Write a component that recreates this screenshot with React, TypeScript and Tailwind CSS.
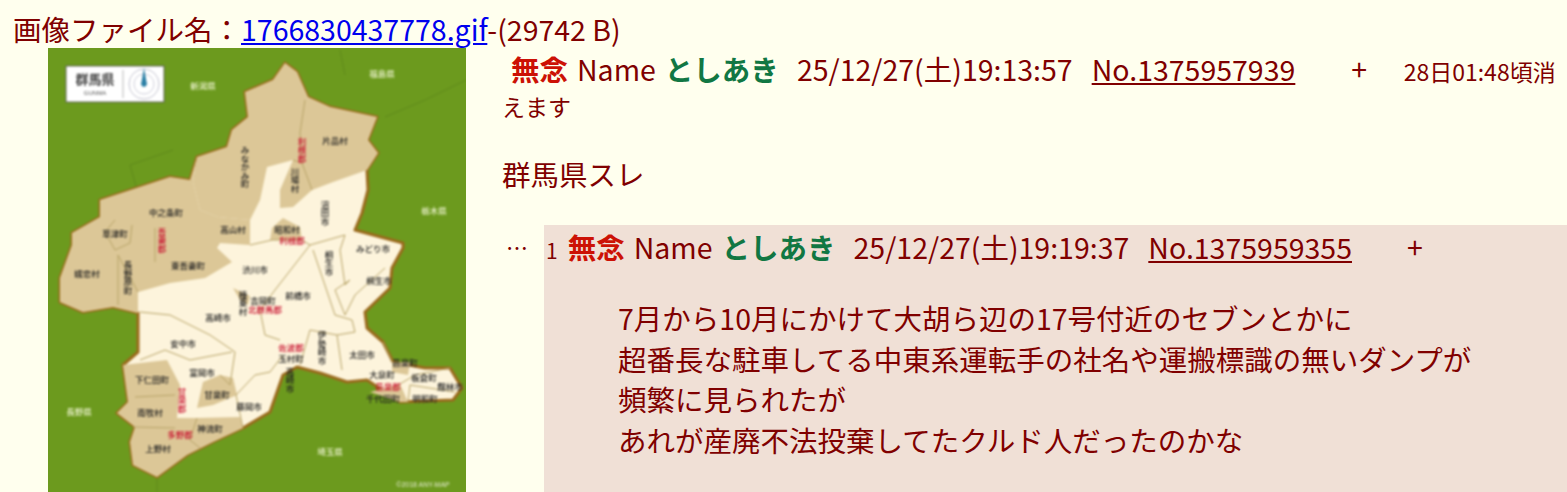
const labels: [string, number, number, string?, boolean?][] = [
  ["新潟県", 203, 85, "#e8f0c8"],
  ["福島県", 382, 73, "#e8f0c8"],
  ["栃木県", 434, 210, "#e8f0c8"],
  ["長野県", 79, 411, "#e8f0c8"],
  ["埼玉県", 330, 451, "#e8f0c8"],
  ["片品村", 335, 140],
  ["みなかみ町", 245, 167, "#222", true],
  ["利根郡", 302, 150, "#c8102e", true],
  ["川場村", 295, 180, "#222", true],
  ["沼田市", 325, 213, "#222", true],
  ["昭和村", 287, 229],
  ["利根郡", 292, 240, "#c8102e"],
  ["中之条町", 166, 212],
  ["草津町", 115, 233],
  ["高山村", 233, 229],
  ["吾妻郡", 162, 240, "#c8102e", true],
  ["みどり市", 373, 248],
  ["東吾妻町", 188, 265],
  ["嬬恋村", 87, 273],
  ["長野原町", 128, 278, "#222", true],
  ["渋川市", 255, 269],
  ["桐生市", 329, 263, "#222", true],
  ["桐生市", 379, 280],
  ["前橋市", 298, 295],
  ["榛東村", 243, 303, "#222", true],
  ["吉岡町", 263, 300],
  ["北群馬郡", 265, 309, "#c8102e"],
  ["高崎市", 218, 317],
  ["伊勢崎市", 322, 348, "#222", true],
  ["佐波郡", 291, 347, "#c8102e"],
  ["玉村町", 291, 358],
  ["太田市", 362, 354],
  ["安中市", 183, 343],
  ["富岡市", 202, 372],
  ["下仁田町", 152, 379],
  ["甘楽郡", 182, 400, "#c8102e", true],
  ["甘楽町", 217, 394],
  ["南牧村", 150, 412],
  ["藤岡市", 249, 406],
  ["神流町", 210, 428],
  ["多野郡", 180, 434, "#c8102e"],
  ["上野村", 158, 448],
  ["高崎市", 290, 380, "#222", true],
  ["邑楽町", 405, 362],
  ["大泉町", 382, 374],
  ["板倉町", 424, 377],
  ["邑楽郡", 388, 386, "#c8102e"],
  ["館林市", 450, 386],
  ["千代田町", 383, 398],
  ["明和町", 425, 398],
];

const outline =
  "285,63 297,72 308,97 330,107 377,117 368,140 378,153 367,170 368,190 362,213 355,230 403,243 403,248 392,268 390,288 365,312 367,328 383,342 393,362 425,368 450,368 462,388 453,400 400,402 367,380 347,382 320,373 297,367 283,375 270,412 243,428 213,442 187,455 157,477 133,465 130,442 135,427 117,413 128,402 123,365 138,352 138,313 113,307 83,312 60,302 60,278 72,245 72,233 100,217 100,200 170,177 190,180 197,157 227,147 232,130 248,117 245,92 273,80";

const tanAreas = [
  "285,63 297,72 308,97 330,107 377,117 368,140 378,153 367,170 333,182 312,190 293,207 280,208 280,190 293,160 267,167 260,200 250,220 218,217 200,210 193,182 197,157 227,147 232,130 248,117 245,92 273,80",
  "72,245 72,233 100,217 100,200 170,177 190,180 197,157 193,182 200,210 218,217 250,220 250,245 220,243 217,248 232,262 205,278 170,283 138,292 138,313 113,307 83,312 60,302 60,278",
  "123,365 167,360 180,385 177,418 197,418 240,417 243,428 213,442 187,455 157,477 133,465 130,442 135,427 117,413 128,402",
  "220,375 233,378 237,395 213,405 197,408 203,382",
  "283,218 300,227 302,240 270,240 272,228",
  "233,288 250,296 248,305 240,300",
  "392,362 410,362 408,375 392,372",
  "370,392 400,384 408,402 400,402",
];

const borders = [
  "305,100 300,133 302,163",
  "293,160 302,163 312,190",
  "115,220 105,232 115,250 130,243 132,225",
  "118,255 118,305",
  "138,292 118,255",
  "155,228 155,262",
  "250,245 272,240 302,240 310,245 345,235",
  "310,245 275,290 260,310 265,335 280,340",
  "313,250 335,315",
  "345,235 340,250 345,285 350,280 335,290 345,315",
  "385,268 355,295 345,315",
  "335,315 352,320 355,332 337,335 310,330 300,365",
  "337,335 342,370",
  "140,312 170,315 210,335 235,352 230,385 220,375",
  "140,360 165,350 190,360 232,352",
  "243,428 236,395 255,375 270,372 283,355",
  "197,418 190,440 200,448",
  "135,397 175,395",
  "133,427 175,428",
  "383,342 392,362",
  "400,384 415,375 450,368",
  "408,402 410,385 455,392",
];

function GunmaMap() {
  return (
    <svg viewBox="48 48 418 444" className="block w-[418px] h-[444px] [filter:blur(0.8px)]">
      <rect x="44" y="44" width="426" height="452" fill="#6c9a1e" />
      <path d="M173 150 L130 165 L150 235 M340 50 L345 75 M385 117 L425 100 L466 80 M157 477 L157 492" fill="none" stroke="#5f8a1b" strokeWidth="1" />
      <polygon points={outline} fill="#fdf4dc" stroke="#9a6a1c" strokeWidth="3" strokeLinejoin="round" />
      {tanAreas.map((p, i) => (
        <polygon key={i} points={p} fill="#dcc797" />
      ))}
      {borders.map((p, i) => (
        <polyline key={i} points={p} fill="none" stroke="#b8a468" strokeWidth="1" />
      ))}
      <g fontFamily="'Noto Sans CJK JP', sans-serif" fontSize="8.5" fontWeight="500">
        {labels.map(([t, x, y, c, v], i) => (
          <text
            key={i}
            x={x}
            y={y}
            fill={c ?? "#222"}
            textAnchor="middle"
            dominantBaseline="central"
            style={v ? { writingMode: "vertical-rl" } : undefined}
          >
            {t}
          </text>
        ))}
      </g>
      {/* legend */}
      <rect x="66" y="66" width="98" height="36" fill="#fff" stroke="#555" strokeWidth="0.9" />
      <text x="95" y="84" textAnchor="middle" fontFamily="'Noto Sans CJK JP', sans-serif" fontSize="13" fontWeight="700" fill="#444">群馬県</text>
      <text x="95" y="95" textAnchor="middle" fontFamily="'Liberation Sans', sans-serif" fontSize="6" fill="#555">GUNMA</text>
      <line x1="123" y1="70" x2="123" y2="98" stroke="#999" strokeWidth="0.7" />
      <circle cx="144" cy="84" r="15" fill="none" stroke="#aab" strokeWidth="0.7" />
      <circle cx="144" cy="84" r="10" fill="none" stroke="#bbc" strokeWidth="0.7" />
      <path d="M144 68 L146.5 82 A3 3 0 1 1 141.5 82 Z" fill="#2a7fa5" />
      <text x="423" y="487" textAnchor="middle" fontFamily="'Liberation Sans', sans-serif" fontSize="7" fill="#e4ecd0">©2018 ANY-MAP</text>
    </svg>
  );
}

function PostHead() {
  return (
    <>
      <span className="font-bold text-[#cc1105]">無念</span>
      <span className="ml-[9px]">Name</span>
      <span className="ml-[9px] font-bold text-[#117743]">としあき</span>
    </>
  );
}

export default function App() {
  return (
    <div className="h-screen overflow-hidden bg-[#ffffee] text-[#800000] text-[28.5px] font-['Noto_Sans_CJK_JP',sans-serif]">
      <div className="pl-[13px] pt-[10px] leading-[38px] whitespace-nowrap">
        画像ファイル名：<a href="#" className="text-[#0000ee] underline">1766830437778.gif</a>-(29742 B)
      </div>
      <div className="flex">
        <div className="ml-[48px] w-[418px] shrink-0 overflow-hidden bg-[#6c9a1e]">
          <GunmaMap />
        </div>
        <div className="ml-[37px] flex-1 min-w-0">
          <div className="h-[41px] leading-[42px] pl-[8px] whitespace-nowrap">
            <PostHead />
            <span className="ml-[18px]">25/12/27(土)19:13:57</span>
            <a href="#" className="ml-[19px] underline">No.1375957939</a>
            <span className="ml-[56px]">+</span>
            <span className="ml-[36.5px] text-[23px]">28日01:48頃消</span>
          </div>
          <div className="text-[23px] leading-[34px] -ml-[1px]">えます</div>
          <div className="mt-[30px] leading-[41px] -ml-[1px]">群馬県スレ</div>
          <div className="mt-[31px] flex">
            <div className="w-[41px] shrink-0 pl-[3px] pt-[1px] text-[22px] leading-[40px]">…</div>
            <div className="flex-1 bg-[#f0e0d6] pb-[40px] h-[300px]">
              <div className="leading-[44px] pl-[2px] whitespace-nowrap">
                <span className="text-[21px]">1</span>
                <span className="ml-[10px]"><PostHead /></span>
                <span className="ml-[18px]">25/12/27(土)19:19:37</span>
                <a href="#" className="ml-[19px] underline">No.1375959355</a>
                <span className="ml-[55px]">+</span>
              </div>
              <div className="mt-[26px] pl-[74px] leading-[40.6px] whitespace-nowrap">
                <div>7月から10月にかけて大胡ら辺の17号付近のセブンとかに</div>
                <div>超番長な駐車してる中東系運転手の社名や運搬標識の無いダンプが</div>
                <div>頻繁に見られたが</div>
                <div>あれが産廃不法投棄してたクルド人だったのかな</div>
              </div>
            </div>
          </div>
        </div>
      </div>
    </div>
  );
}
